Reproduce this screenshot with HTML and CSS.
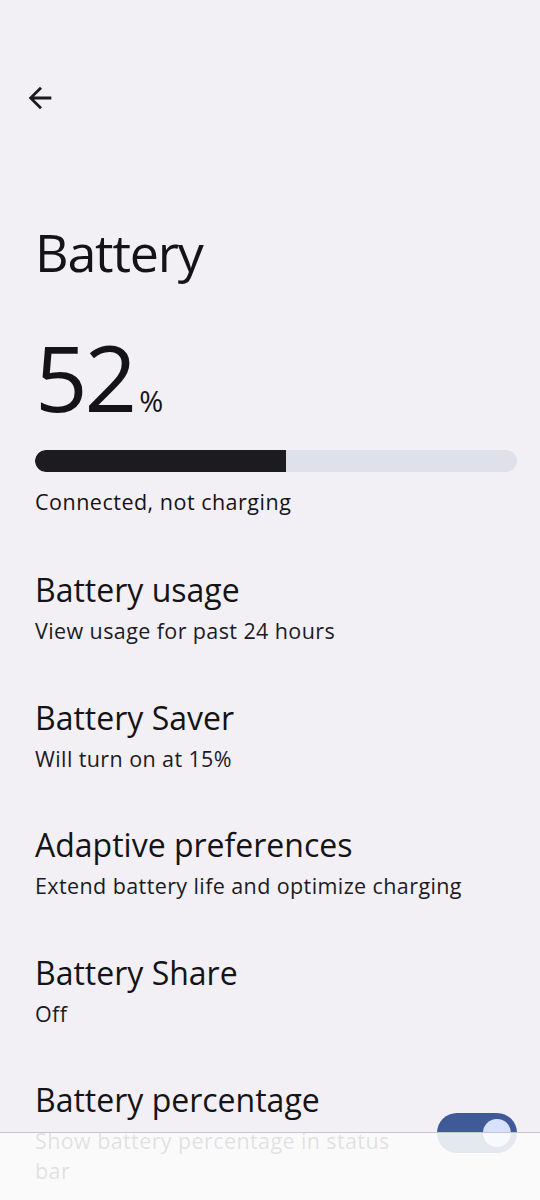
FILE: index.html
```html
<!DOCTYPE html>
<html lang="en">
  <head>
    <meta charset="UTF-8" />
    <meta name="viewport" content="width=device-width, initial-scale=1" />
    <title>Battery</title>
    <link rel="stylesheet" href="styles.css">
  </head>
  <body>
    <header class="top-bar">
      <button class="back-btn" aria-label="Back">
        <svg width="34" height="34" viewBox="0 0 24 24">
          <path d="M20 11H7.83l5.59-5.59L12 4l-8 8 8 8 1.41-1.41L7.83 13H20v-2z" fill="#1b1b1f"/>
        </svg>
      </button>
    </header>

    <h1 class="page-title">Battery</h1>

    <div class="level">
      <span class="level-num">52</span><span class="level-unit">%</span>
    </div>

    <div class="meter">
      <div class="meter-fill" style="width: 52%"></div>
    </div>
    <div class="status">Connected, not charging</div>

    <ul class="pref-list">
      <li class="pref">
        <div class="pref-title">Battery usage</div>
        <div class="pref-sub">View usage for past 24 hours</div>
      </li>
      <li class="pref">
        <div class="pref-title">Battery Saver</div>
        <div class="pref-sub">Will turn on at 15%</div>
      </li>
      <li class="pref">
        <div class="pref-title">Adaptive preferences</div>
        <div class="pref-sub">Extend battery life and optimize charging</div>
      </li>
      <li class="pref">
        <div class="pref-title">Battery Share</div>
        <div class="pref-sub">Off</div>
      </li>
      <li class="pref pref-switch">
        <div class="pref-text">
          <div class="pref-title">Battery percentage</div>
          <div class="pref-sub">Show battery percentage in status bar</div>
        </div>
        <div class="switch on"><span class="thumb"></span></div>
      </li>
    </ul>

    <div class="bottom-sheet"></div>
  </body>
</html>
```

FILE: styles.css
```css
html,
body {
  margin: 0;
  height: 100%;
}

body {
  background-color: #f2eff5;
  color: #141416;
  font-family: "Open Sans", "Noto Sans", sans-serif;
  padding: 0 23px 0 35px;
  overflow: hidden;
  position: relative;
}

.top-bar {
  height: 196px;
  display: flex;
  align-items: center;
}

.back-btn {
  background: none;
  border: none;
  padding: 0;
  margin-left: -12px;
  width: 34px;
  height: 34px;
  cursor: pointer;
}

.back-btn svg {
  display: block;
}

.page-title {
  margin: 24px 0 0 0;
  font-size: 52px;
  font-weight: 400;
  line-height: 64px;
  letter-spacing: -1.2px;
}

.level {
  margin-top: 43px;
  height: 100px;
  display: flex;
  align-items: baseline;
}

.level-num {
  font-size: 92px;
  line-height: 100px;
  letter-spacing: -3px;
}

.level-unit {
  font-size: 29px;
  margin-left: 5px;
}

.meter {
  margin-top: 23px;
  height: 22px;
  border-radius: 11px;
  background-color: #dfe1ea;
  overflow: hidden;
}

.meter-fill {
  height: 100%;
  background-color: #1c1b1f;
  border-radius: 11px 0 0 11px;
}

.status {
  margin-top: 15px;
  font-size: 21.5px;
  line-height: 30px;
  letter-spacing: 0.5px;
}

.pref-list {
  list-style: none;
  margin: 53px 0 0 0;
  padding: 0;
}

.pref {
  height: 127.5px;
}

.pref-title {
  font-size: 32px;
  line-height: 40px;
}

.pref-sub {
  margin-top: 6px;
  font-size: 21.5px;
  line-height: 30px;
  letter-spacing: 0.4px;
  color: #1b1b1f;
}

.pref-switch {
  display: flex;
  align-items: center;
  gap: 37px;
  height: auto;
}

.pref-text {
  flex: 1;
}

.switch {
  width: 80px;
  height: 40px;
  border-radius: 20px;
  background-color: #3f5a97;
  flex-shrink: 0;
  position: relative;
}

.switch .thumb {
  position: absolute;
  right: 6px;
  top: 6px;
  width: 28px;
  height: 28px;
  border-radius: 50%;
  background-color: #d8e2ff;
}

/* pannello chiaro sovrapposto in basso */
.bottom-sheet {
  position: absolute;
  left: 0;
  right: 0;
  top: 1132px;
  bottom: 0;
  background-color: rgba(252, 252, 252, 0.88);
  border-top: 1px solid #c6c5ca;
}
```
